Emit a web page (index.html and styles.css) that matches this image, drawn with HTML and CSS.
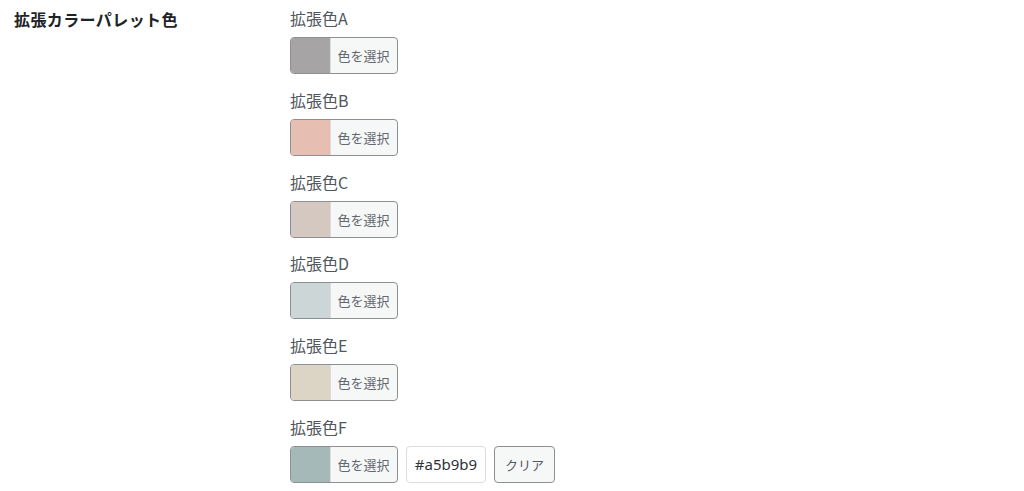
FILE: index.html
```html
<!DOCTYPE html>
<html lang="ja">
<head>
<meta charset="utf-8">
<link rel="stylesheet" href="styles.css">
</head>
<body>
<div class="form-row">
  <div class="row-title">拡張カラーパレット色</div>
  <div class="fields">
    <div class="field">
      <div class="label">拡張色A</div>
      <div class="controls"><button class="color-result"><span class="swatch" style="background:#a6a4a4"></span><span class="btn-text">色を選択</span></button></div>
    </div>
    <div class="field">
      <div class="label">拡張色B</div>
      <div class="controls"><button class="color-result"><span class="swatch" style="background:#e7beb2"></span><span class="btn-text">色を選択</span></button></div>
    </div>
    <div class="field">
      <div class="label">拡張色C</div>
      <div class="controls"><button class="color-result"><span class="swatch" style="background:#d5c8c0"></span><span class="btn-text">色を選択</span></button></div>
    </div>
    <div class="field">
      <div class="label">拡張色D</div>
      <div class="controls"><button class="color-result"><span class="swatch" style="background:#cdd6d6"></span><span class="btn-text">色を選択</span></button></div>
    </div>
    <div class="field">
      <div class="label">拡張色E</div>
      <div class="controls"><button class="color-result"><span class="swatch" style="background:#dcd4c4"></span><span class="btn-text">色を選択</span></button></div>
    </div>
    <div class="field">
      <div class="label">拡張色F</div>
      <div class="controls">
        <button class="color-result"><span class="swatch" style="background:#a5b9b9"></span><span class="btn-text">色を選択</span></button>
        <input class="hex-input" type="text" value="#a5b9b9">
        <button class="clear-btn">クリア</button>
      </div>
    </div>
  </div>
</div>
</body>
</html>
```
FILE: styles.css
```css
html, body {
  margin: 0;
  padding: 0;
  background: #ffffff;
}
body {
  font-family: "Noto Sans CJK JP", "Noto Sans", "Liberation Sans", sans-serif;
  color: #3c434a;
}
.form-row {
  display: grid;
  grid-template-columns: 276px 1fr;
  padding-left: 14px;
  padding-top: 6px;
}
.row-title {
  font-size: 16px;
  font-weight: 700;
  letter-spacing: 0.4px;
  color: #1d2327;
  line-height: 26px;
}
.fields {
  display: flex;
  flex-direction: column;
}
.field {
  display: flex;
  flex-direction: column;
  height: 81.8px;
}
.label {
  font-size: 16px;
  line-height: 24px;
  color: #50575e;
  margin-bottom: 7px;
}
.controls {
  display: flex;
  gap: 8px;
  align-items: stretch;
}
.color-result {
  display: flex;
  padding: 0;
  margin: 0;
  height: 37px;
  width: 108px;
  border: 1px solid #8c8f94;
  border-radius: 4px;
  background: #f6f7f7;
  overflow: hidden;
  cursor: pointer;
  font-family: inherit;
}
.swatch {
  width: 39px;
  height: 100%;
  border-right: 1px solid #dcdcde;
  flex: none;
}
.btn-text {
  flex: 1;
  display: flex;
  align-items: center;
  justify-content: center;
  font-size: 13px;
  color: #646970;
  padding-right: 1px;
}
.hex-input {
  box-sizing: border-box;
  width: 80px;
  height: 37px;
  margin: 0;
  border: 1px solid #dcdcde;
  border-radius: 4px;
  background: #ffffff;
  font-family: "Noto Sans", "DejaVu Sans", sans-serif;
  font-size: 15px;
  color: #2c3338;
  padding: 0 4px;
  text-align: center;
}
.clear-btn {
  box-sizing: border-box;
  width: 61px;
  height: 37px;
  margin: 0;
  border: 1px solid #8c8f94;
  border-radius: 4px;
  background: #f6f7f7;
  font-family: inherit;
  font-size: 13px;
  color: #50575e;
  padding: 0;
}
```
